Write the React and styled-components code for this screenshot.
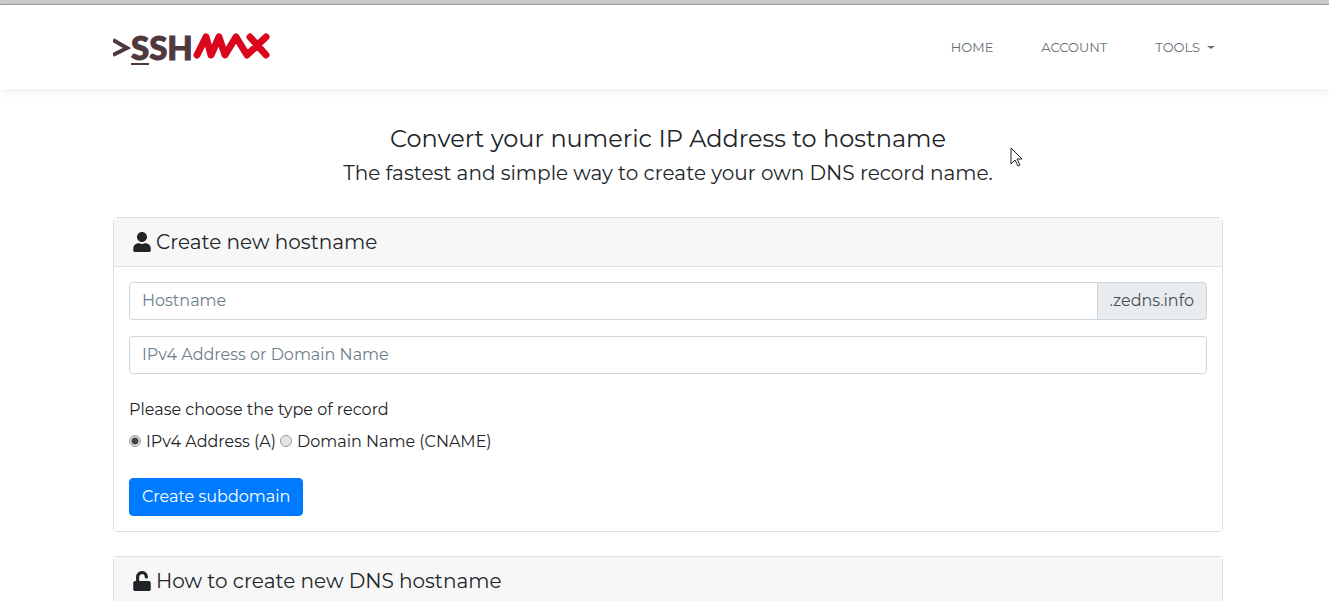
import React, { useState } from "react";
import styled, { createGlobalStyle } from "styled-components";

const GlobalStyle = createGlobalStyle`
  *, *::before, *::after { box-sizing: border-box; }
  body {
    margin: 0;
    background: #fff;
    color: #212529;
    font-family: Montserrat, Inter, "Open Sans", sans-serif;
    font-size: 16px;
    font-weight: 400;
    line-height: 24px;
    overflow: hidden;
  }
  input, button { font: inherit; }
`;

const Page = styled.div`
  border-top: 4px solid #cdcdcd;
`;

const Container = styled.div`
  width: 100%;
  max-width: 1147px;
  margin: 0 auto;
  padding: 0 15px 0 22px;
`;

const Header = styled.header`
  padding: 12px 0;
  box-shadow: 0 2px 10px rgba(0, 0, 0, 0.08);
  border-top: 1px solid #9a9a9a;
`;

const Bar = styled(Container)`
  display: flex;
  align-items: center;
  justify-content: space-between;
  height: 60px;
`;

const Brand = styled.a`
  display: flex;
  align-items: center;
  color: #50383f;
  font: 900 33px/36px Lato, sans-serif;
  -webkit-text-stroke: 1px #50383f;
  text-decoration: none;

  svg { display: block; }
`;

const Underlined = styled.span`
  box-shadow: 0 -2px 0 #50383f inset;
`;

const Nav = styled.nav`
  display: flex;
  gap: 48px;
  padding-right: 8px;
`;

const NavLink = styled.a`
  display: flex;
  align-items: center;
  gap: 7px;
  color: #65707a;
  font-size: 13px;
  font-weight: 400;
  line-height: 20px;
  text-decoration: none;
  text-transform: uppercase;
`;

const Caret = styled.span`
  border: 4px solid transparent;
  border-top: 3px solid currentColor;
  border-bottom: 0;
`;

const Intro = styled.section`
  padding: 34px 0 29px;
  text-align: center;
`;

const Title = styled.h1`
  margin: 0;
  font-size: 24px;
  font-weight: 400;
  line-height: 32px;
`;

const Lead = styled.p`
  margin: 3px 0 0;
  font-size: 20px;
  line-height: 30px;
`;

const Card = styled.section`
  margin-bottom: 24px;
  border: 1px solid #dfdfdf;
  border-radius: 4px;
`;

const CardHeader = styled.h2`
  display: flex;
  align-items: center;
  gap: 5px;
  margin: 0;
  padding: 12px 19px;
  background: #f7f7f7;
  border-bottom: 1px solid #dfdfdf;
  font-size: 20px;
  font-weight: 400;
  line-height: 24px;
`;

const CardBody = styled.form`
  padding: 15px;
`;

const Group = styled.div`
  display: flex;
  margin-bottom: 16px;
`;

const Field = styled.input`
  flex: 1;
  min-width: 0;
  height: 38px;
  padding: 5px 12px 7px;
  border: 1px solid #ced4da;
  border-radius: ${(p) => (p.$joined ? "4px 0 0 4px" : "4px")};
  background: #fff;
  color: #495057;

  &::placeholder { color: #6c7f8a; opacity: 1; }
`;

const Suffix = styled.span`
  padding: 6px 12px;
  border: 1px solid #ced4da;
  border-left: 0;
  border-radius: 0 4px 4px 0;
  background: #e9ecef;
  color: #495057;
`;

const Records = styled.fieldset`
  margin: 24px 0;
  padding: 0;
  border: 0;
`;

const Legend = styled.legend`
  padding: 0;
  margin-bottom: 8px;
`;

const Options = styled.div`
  display: flex;
  gap: 4px;
`;

const Option = styled.label`
  display: flex;
  align-items: center;
  gap: 5px;
`;

const Radio = styled.input`
  appearance: none;
  width: 12px;
  height: 12px;
  margin: 0 0 2px;
  border: 1px solid #999;
  border-radius: 50%;
  background: #e4e4e4;

  &:checked { background: radial-gradient(circle, #444 0 3px, #e4e4e4 4px); }
`;

const Submit = styled.button`
  display: block;
  height: 38px;
  padding: 6px 12px;
  border: 1px solid #007bff;
  border-radius: 4px;
  background: #007bff;
  color: #fff;
  font-weight: 400;
  cursor: pointer;
`;

const Pointer = styled.svg`
  position: absolute;
  left: 1010px;
  top: 147px;
`;

const UserIcon = () => (
  <svg width="18" height="20" viewBox="0 0 448 512" fill="currentColor" aria-hidden="true">
    <path d="M224 256c70.700 0 128-57.300 128-128S294.700 0 224 0 96 57.300 96 128s57.300 128 128 128zm89.600 32h-16.700c-22.200 10.200-46.900 16-72.900 16s-50.600-5.800-72.900-16h-16.700C60.200 288 0 348.200 0 422.400V464c0 26.500 21.500 48 48 48h352c26.500 0 48-21.500 48-48v-41.600c0-74.200-60.200-134.400-134.400-134.400z" />
  </svg>
);

const UnlockIcon = () => (
  <svg width="18" height="20" viewBox="0 0 448 512" fill="currentColor" aria-hidden="true">
    <path d="M400 256H152V152.900c0-39.600 31.700-72.500 71.300-72.900 40-.4 72.700 32.100 72.700 72v16c0 13.300 10.700 24 24 24h32c13.300 0 24-10.700 24-24v-16C376 68 307.500-.3 223.500 0 139.500.3 72 69.500 72 153.500V256H48c-26.500 0-48 21.500-48 48v160c0 26.500 21.500 48 48 48h352c26.500 0 48-21.500 48-48V304c0-26.500-21.500-48-48-48z" />
  </svg>
);

export default function App() {
  const [type, setType] = useState("A");
  return (
    <>
      <GlobalStyle />
      <Page>
        <Header>
          <Bar>
            <Brand href="#" aria-label="SSHMAX">
              <svg width="18" height="20" viewBox="0 0 18 20" fill="none" stroke="currentColor" strokeWidth="4" aria-hidden="true">
                <path d="M0 3L14 11L0 18" />
              </svg>
              <Underlined>S</Underlined>SH
              <svg width="78" height="28" viewBox="0 0 78 28" fill="none" stroke="#d9061c" strokeWidth="7" strokeLinecap="round" strokeLinejoin="round" aria-hidden="true">
                <path d="M4 22L13 4L18 22L26 4L32 22L43 4L54 22L73 4M57 4L73 22" />
              </svg>
            </Brand>
            <Nav>
              <NavLink href="#">Home</NavLink>
              <NavLink href="#">Account</NavLink>
              <NavLink href="#">Tools<Caret /></NavLink>
            </Nav>
          </Bar>
        </Header>
        <Container as="main">
          <Intro>
            <Title>Convert your numeric IP Address to hostname</Title>
            <Lead>The fastest and simple way to create your own DNS record name.</Lead>
          </Intro>
          <Card>
            <CardHeader><UserIcon />Create new hostname</CardHeader>
            <CardBody onSubmit={(e) => e.preventDefault()}>
              <Group>
                <Field $joined aria-label="Hostname" placeholder="Hostname" />
                <Suffix>.zedns.info</Suffix>
              </Group>
              <Group>
                <Field aria-label="IPv4 Address or Domain Name" placeholder="IPv4 Address or Domain Name" />
              </Group>
              <Records>
                <Legend>Please choose the type of record</Legend>
                <Options>
                  <Option><Radio type="radio" name="type" checked={type === "A"} onChange={() => setType("A")} />IPv4 Address (A)</Option>
                  <Option><Radio type="radio" name="type" checked={type === "CNAME"} onChange={() => setType("CNAME")} />Domain Name (CNAME)</Option>
                </Options>
              </Records>
              <Submit type="submit">Create subdomain</Submit>
            </CardBody>
          </Card>
          <Card>
            <CardHeader><UnlockIcon />How to create new DNS hostname</CardHeader>
          </Card>
        </Container>
      </Page>
      <Pointer width="13" height="20" viewBox="0 0 13 20" aria-hidden="true">
        <path d="M1 1V17L5 13L8 19L10 18L7 12H12Z" fill="#fff" stroke="#222" />
      </Pointer>
    </>
  );
}
